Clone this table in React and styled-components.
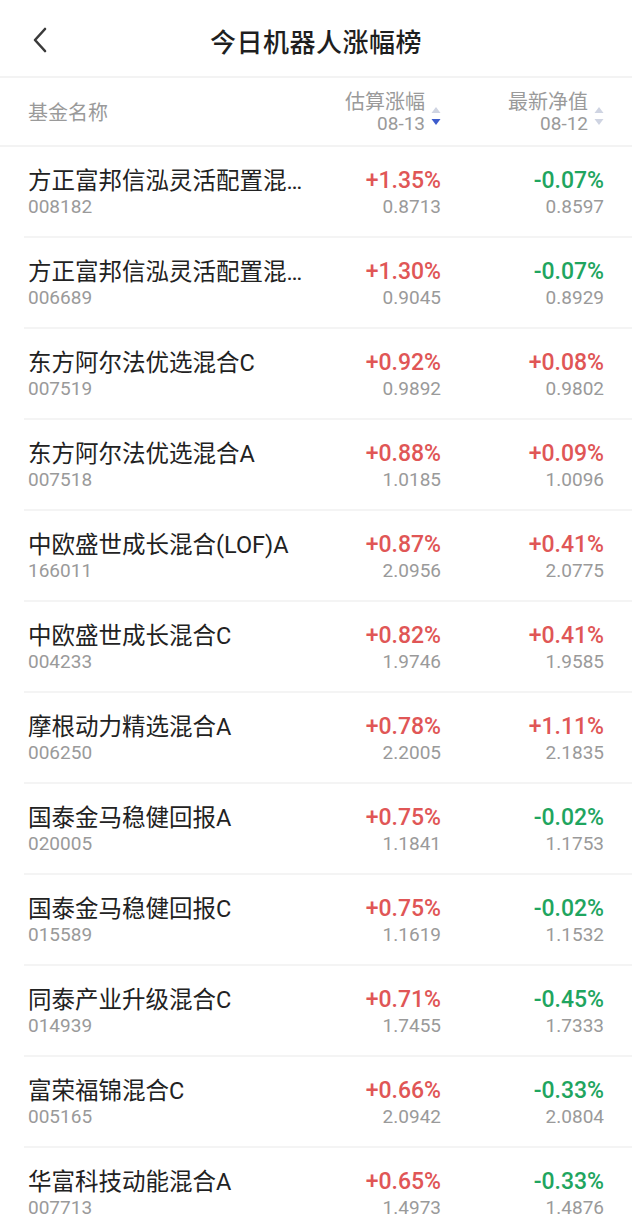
import styled, { createGlobalStyle } from "styled-components";

const funds = [
  { name: "方正富邦信泓灵活配置混合C", code: "008182", est: "+1.35%", estVal: "0.8713", nav: "-0.07%", navVal: "0.8597" },
  { name: "方正富邦信泓灵活配置混合A", code: "006689", est: "+1.30%", estVal: "0.9045", nav: "-0.07%", navVal: "0.8929" },
  { name: "东方阿尔法优选混合C", code: "007519", est: "+0.92%", estVal: "0.9892", nav: "+0.08%", navVal: "0.9802" },
  { name: "东方阿尔法优选混合A", code: "007518", est: "+0.88%", estVal: "1.0185", nav: "+0.09%", navVal: "1.0096" },
  { name: "中欧盛世成长混合(LOF)A", code: "166011", est: "+0.87%", estVal: "2.0956", nav: "+0.41%", navVal: "2.0775" },
  { name: "中欧盛世成长混合C", code: "004233", est: "+0.82%", estVal: "1.9746", nav: "+0.41%", navVal: "1.9585" },
  { name: "摩根动力精选混合A", code: "006250", est: "+0.78%", estVal: "2.2005", nav: "+1.11%", navVal: "2.1835" },
  { name: "国泰金马稳健回报A", code: "020005", est: "+0.75%", estVal: "1.1841", nav: "-0.02%", navVal: "1.1753" },
  { name: "国泰金马稳健回报C", code: "015589", est: "+0.75%", estVal: "1.1619", nav: "-0.02%", navVal: "1.1532" },
  { name: "同泰产业升级混合C", code: "014939", est: "+0.71%", estVal: "1.7455", nav: "-0.45%", navVal: "1.7333" },
  { name: "富荣福锦混合C", code: "005165", est: "+0.66%", estVal: "2.0942", nav: "-0.33%", navVal: "2.0804" },
  { name: "华富科技动能混合A", code: "007713", est: "+0.65%", estVal: "1.4973", nav: "-0.33%", navVal: "1.4876" },
];

const GlobalStyle = createGlobalStyle`
  body {
    margin: 0;
    background: #fff;
    font-family: Roboto, "Noto Sans CJK SC", sans-serif;
  }
`;

// up/down sort triangles, the active one is blue
const SortArrows = ({ active }) => (
  <Arrows width="10" height="22" viewBox="0 0 10 22">
    <path d="M5 1 L9.5 7 L0.5 7 Z" fill="#cfd4e2" />
    <path d="M0.5 13 L9.5 13 L5 19 Z" fill={active ? "#3d5ccc" : "#cfd4e2"} />
  </Arrows>
);

const App = () => {
  return (
    <>
      <GlobalStyle />
      <Page>
        <TopBar>
          <BackButton>
            <svg width="16" height="26" viewBox="0 0 16 26">
              <path d="M13 2 L3 13 L13 24" fill="none" stroke="#3a3a3a" strokeWidth="2.6" strokeLinecap="round" strokeLinejoin="round" />
            </svg>
          </BackButton>
          <Title>今日机器人涨幅榜</Title>
        </TopBar>
        <TableHead>
          <HeadName>基金名称</HeadName>
          <HeadCol>
            <HeadText>
              <span>估算涨幅</span>
              <span>08-13</span>
            </HeadText>
            <SortArrows active />
          </HeadCol>
          <HeadCol>
            <HeadText>
              <span>最新净值</span>
              <span>08-12</span>
            </HeadText>
            <SortArrows />
          </HeadCol>
        </TableHead>
        <List>
          {funds.map((f) => (
            <Row key={f.code}>
              <NameCell>
                <FundName>{f.name}</FundName>
                <Sub>{f.code}</Sub>
              </NameCell>
              <ValueCell>
                <Change $up={f.est.startsWith("+")}>{f.est}</Change>
                <Sub>{f.estVal}</Sub>
              </ValueCell>
              <ValueCell>
                <Change $up={f.nav.startsWith("+")}>{f.nav}</Change>
                <Sub>{f.navVal}</Sub>
              </ValueCell>
            </Row>
          ))}
        </List>
      </Page>
    </>
  );
};

const Page = styled.div`
  width: 632px;
  min-height: 1222px;
  background: #fff;
`;

const TopBar = styled.header`
  position: relative;
  height: 78px;
  display: flex;
  align-items: center;
  justify-content: center;
  border-bottom: 2px solid #f3f3f3;
  box-sizing: border-box;
`;

const BackButton = styled.div`
  position: absolute;
  left: 32px;
  top: 27px;
  display: flex;
`;

const Title = styled.h1`
  margin: 0;
  font-family: "Noto Sans CJK SC", sans-serif;
  font-size: 26px;
  font-weight: 500;
  color: #1f1f1f;
  letter-spacing: 0.5px;
  padding-top: 4px;
`;

const TableHead = styled.div`
  height: 67px;
  display: grid;
  grid-template-columns: 1fr 110px 163px;
  align-items: center;
  padding: 0 28px;
  border-bottom: 2px solid #f3f3f3;
`;

const HeadName = styled.div`
  font-family: "Noto Sans CJK SC", sans-serif;
  font-size: 20px;
  color: #9a9a9a;
`;

const HeadCol = styled.div`
  display: flex;
  justify-content: flex-end;
  align-items: center;
  gap: 6px;
`;

const HeadText = styled.div`
  display: flex;
  flex-direction: column;
  align-items: flex-end;
  font-family: "Noto Sans CJK SC", sans-serif;
  font-size: 20px;
  line-height: 23px;
  color: #9a9a9a;

  span:last-child {
    font-family: Roboto, sans-serif;
    font-size: 19px;
  }
`;

const Arrows = styled.svg`
  margin-top: 10px;
  flex-shrink: 0;
`;

const List = styled.div``;

const Row = styled.div`
  display: grid;
  grid-template-columns: 1fr 110px 163px;
  align-items: start;
  height: 91px;
  box-sizing: border-box;
  margin-left: 24px;
  padding: 19px 28px 0 4px;
  border-bottom: 2px solid #f4f4f4;
`;

const NameCell = styled.div`
  min-width: 0;
`;

const FundName = styled.div`
  font-family: Roboto, "Noto Sans CJK SC", sans-serif;
  font-size: 23.5px;
  line-height: 30px;
  color: #222;
  white-space: nowrap;
  overflow: hidden;
  text-overflow: ellipsis;
  max-width: 282px;
`;

const Sub = styled.div`
  font-family: Roboto, sans-serif;
  font-size: 19px;
  line-height: 22px;
  color: #9a9a9a;
`;

const ValueCell = styled.div`
  display: flex;
  flex-direction: column;
  align-items: flex-end;
`;

const Change = styled.div`
  font-family: Roboto, sans-serif;
  font-size: 23px;
  font-weight: 500;
  line-height: 30px;
  color: ${(p) => (p.$up ? "#e05656" : "#1fa55f")};
`;

export default App;
